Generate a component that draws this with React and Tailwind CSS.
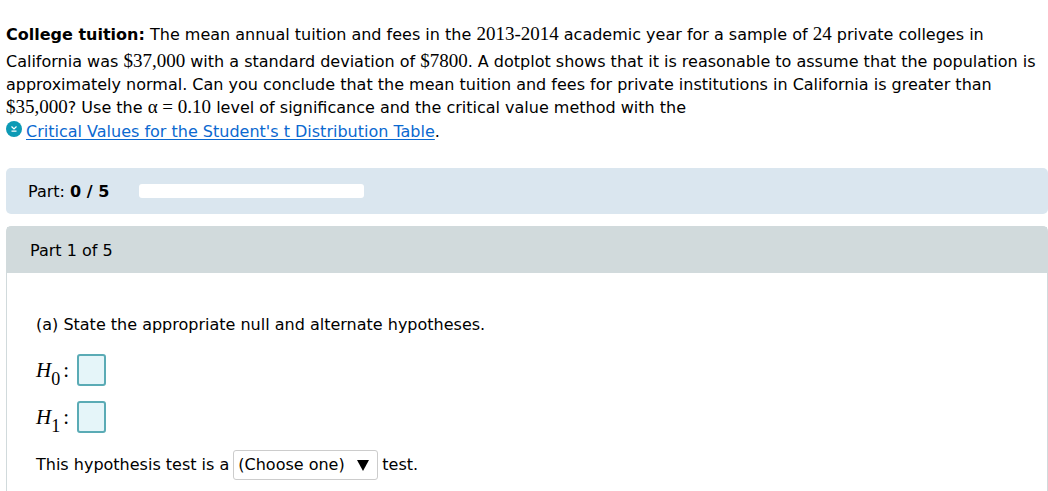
function Num({ children }) {
  return <span className="font-['Liberation_Serif',serif] text-[19px] leading-none">{children}</span>;
}

function Hypothesis({ index }) {
  const id = `hypothesis-${index}`;
  return (
    <div className="flex h-8 items-center">
      <label htmlFor={id} className="w-[41px] font-['Liberation_Serif',serif] text-[21px] leading-8">
        <i>H</i>
        <sub className="-bottom-2 text-[18px]">{index}</sub>
        <span className="pl-[3px]">:</span>
      </label>
      <input
        id={id}
        type="text"
        className="h-8 w-[29px] rounded-[3px] border-2 border-[#5aabb5] bg-[#e5f5f9] text-center outline-none"
      />
    </div>
  );
}

export default function App() {
  return (
    <main className="min-h-screen overflow-x-hidden bg-white pt-[23px] pl-[6px] font-['DejaVu_Sans',Verdana,sans-serif] text-[16px] text-black">
      <p className="leading-[23px] whitespace-nowrap">
        <span className="mb-1 block">
          <b>College tuition:</b> The mean annual tuition and fees in the <Num>2013-2014</Num> academic year for a
          sample of <Num>24</Num> private colleges in
        </span>
        <span className="block">
          California was <Num>$37,000</Num> with a standard deviation of <Num>$7800</Num>. A dotplot shows that it is
          reasonable to assume that the population is
        </span>
        <span className="block">
          approximately normal. Can you conclude that the mean tuition and fees for private institutions in California
          is greater than
        </span>
        <span className="block">
          <Num>$35,000</Num>? Use the <Num>α = 0.10</Num> level of significance and the critical value method with the
        </span>
        <span className="flex h-6 items-center">
          <svg className="mr-1 mb-1 h-4 w-4 shrink-0" viewBox="0 0 16 16" aria-hidden="true">
            <circle cx="8" cy="8" r="8" fill="#0d9ab5" />
            <path d="M5.5 5.5 8 8l2.5-2.5M5.5 10.2h5" fill="none" stroke="white" strokeWidth="1.2" />
          </svg>
          <a href="#table" className="text-[#0b69d0] underline decoration-[#0b69d0] decoration-1 underline-offset-2">
            Critical Values for the Student's t Distribution Table
          </a>
          .
        </span>
      </p>

      <section className="mt-[25px] flex h-[46px] items-center rounded-[5px] bg-[#dae6ef] px-[22px]">
        <span className="w-[111px] pt-0.5 whitespace-nowrap">
          Part: <b>0 / 5</b>
        </span>
        <div className="h-[14px] w-[225px] rounded-[3px] bg-white" />
      </section>

      <section className="mt-3 rounded-t-[5px] border border-b-0 border-[#d1dadc] pb-3">
        <h2 className="bg-[#d1dadc] px-[23px] pt-0.5 leading-11">Part 1 of 5</h2>
        <div className="flex flex-col items-start px-[29px] pt-10">
          <p className="leading-6">(a) State the appropriate null and alternate hypotheses.</p>
          <div className="mt-[17px] flex flex-col gap-[15px]">
            <Hypothesis index={0} />
            <Hypothesis index={1} />
          </div>
          <div className="mt-[17px] flex items-center gap-1 whitespace-nowrap">
            <label htmlFor="test-kind">This hypothesis test is a</label>
            <div className="grid items-center">
              <select
                id="test-kind"
                className="col-start-1 row-start-1 h-[30px] w-[145px] appearance-none rounded-[3px] border border-[#ccc] bg-white pl-1"
              >
                <option>(Choose one)</option>
              </select>
              <svg
                className="pointer-events-none col-start-1 row-start-1 mr-[9px] h-[11px] w-3 justify-self-end"
                viewBox="0 0 12 11"
                aria-hidden="true"
              >
                <path d="M0 0h12L6 11z" fill="black" />
              </svg>
            </div>
            <span>test.</span>
          </div>
        </div>
      </section>
    </main>
  );
}
